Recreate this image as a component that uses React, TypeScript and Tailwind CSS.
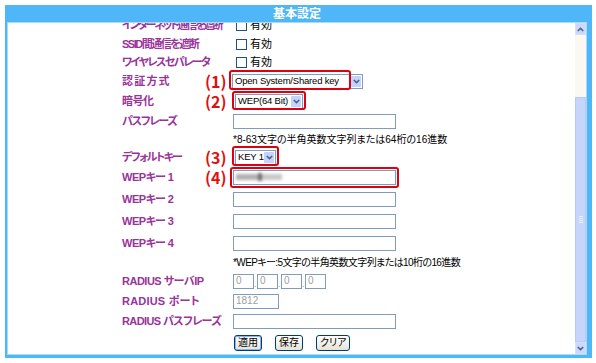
import React from "react";

const FONT = "[font-family:'Liberation_Sans','Noto_Sans_CJK_JP',sans-serif] [font-feature-settings:'palt']";

function Label({ children, t = "" }: { children?: React.ReactNode; t?: string }) {
  return (
    <span className={`w-[83px] shrink-0 whitespace-nowrap text-[11px] font-bold leading-none text-[#993399] ${t}`}>
      {children}
    </span>
  );
}

function Marker({ n }: { n?: number }) {
  return (
    <span className="w-[27px] shrink-0 whitespace-nowrap text-[16px] font-bold leading-none text-[#dd1111] [font-family:'Noto_Sans_CJK_JP',sans-serif]">
      {n ? `(${n})` : ""}
    </span>
  );
}

function Chevron({ up = false }: { up?: boolean }) {
  return (
    <svg width="7" height="5" viewBox="0 0 7 5" className={up ? "rotate-180" : ""}>
      <path d="M0.8 1 L3.5 3.6 L6.2 1" fill="none" stroke="#4d6185" strokeWidth="1.5" />
    </svg>
  );
}

function Select({ text, w }: { text: string; w: string }) {
  return (
    <div className={`flex h-[15px] items-center border border-[#7f9db9] bg-white ${w}`}>
      <span className="flex-1 whitespace-nowrap pl-[2px] text-[9.5px] leading-none tracking-[-0.2px] text-black">{text}</span>
      <span className="mr-[1px] flex h-[11px] w-[10px] shrink-0 items-center justify-center rounded-[1px] bg-[#c3d3fd]">
        <Chevron />
      </span>
    </div>
  );
}

function Input({ w = "w-[163px]", value, gray = false }: { w?: string; value?: string; gray?: boolean }) {
  return (
    <div className={`flex h-[15px] items-center border border-[#7f9db9] bg-white px-[2px] ${w}`}>
      {value ? <span className={`text-[10px] leading-none ${gray ? "text-[#a0a0a0]" : "text-black"}`}>{value}</span> : null}
    </div>
  );
}

function Check() {
  return (
    <div className="ml-[4px] flex items-center gap-[3px]">
      <span className="h-[11px] w-[11px] border border-[#1c5180] bg-white" />
      <span className="text-[11px] leading-none text-black">有効</span>
    </div>
  );
}

function Button({ text, focus = false }: { text: string; focus?: boolean }) {
  return (
    <div
      className={`flex h-[16px] items-center justify-center rounded-[3px] border border-[#003c74] bg-gradient-to-b from-white to-[#e6e3d6] px-[3px] text-[10px] leading-none text-black ${
        focus ? "shadow-[inset_0_0_0_1px_#8fb2f3]" : ""
      }`}
    >
      {text}
    </div>
  );
}

function Annot({ className }: { className: string }) {
  return <div className={`pointer-events-none absolute rounded-[3px] border-2 border-[#dd0011] ${className}`} />;
}

function Scrollbar() {
  return (
    <div className="flex w-[11px] shrink-0 flex-col bg-[#fbf8f1]">
      <div className="flex h-[12px] items-center justify-center border border-[#d5e0fb] bg-[#c9d8fc]">
        <Chevron up />
      </div>
      <div className="h-[62px]" />
      <div className="flex flex-1 items-center justify-center border border-[#b8c9f5] bg-[#c6d5fb]">
        <div className="flex flex-col gap-[1px]">
          <span className="h-px w-[4px] bg-[#e8eefe]" />
          <span className="h-px w-[4px] bg-[#e8eefe]" />
          <span className="h-px w-[4px] bg-[#e8eefe]" />
          <span className="h-px w-[4px] bg-[#e8eefe]" />
        </div>
      </div>
      <div className="flex h-[12px] items-center justify-center border border-[#d5e0fb] bg-[#c9d8fc]">
        <Chevron />
      </div>
    </div>
  );
}

export default function App() {
  return (
    <div className={`h-[363px] w-[596px] bg-white pl-[5px] pt-[5px] ${FONT}`}>
      <div className="flex h-[353px] w-[587px] flex-col bg-[#4fb6f7] pb-[3px] pl-[2px] pr-[5px]">
        <div className="flex h-[17px] items-center justify-center text-[12px] font-bold leading-none text-white">
          基本設定
        </div>
        <div className="flex flex-1 overflow-hidden border border-[#a9d9fb] bg-white">
          <div className="flex-1 overflow-hidden pl-[114px]">
            <div className="mt-[-8px] flex flex-col">
              <div className="flex h-[20px] items-center">
                <Label t="tracking-[-2.1px]">インターネット通信を遮断</Label>
                <Marker />
                <Check />
              </div>
              <div className="flex h-[18px] items-center">
                <Label t="tracking-[-1.5px]">SSID間通信を遮断</Label>
                <Marker />
                <Check />
              </div>
              <div className="flex h-[18px] items-center">
                <Label t="tracking-[-1.6px]">ワイヤレスセパレータ</Label>
                <Marker />
                <Check />
              </div>
              <div className="flex h-[20px] items-center">
                <Label t="tracking-[1.2px]">認証方式</Label>
                <Marker n={1} />
                <div className="relative">
                  <Select text="Open System/Shared key" w="w-[131px]" />
                  <Annot className="left-[-3px] top-[-4px] h-[20px] w-[122px]" />
                </div>
              </div>
              <div className="flex h-[20px] items-center">
                <Label t="tracking-[-0.5px]">暗号化</Label>
                <Marker n={2} />
                <div className="relative ml-[3px]">
                  <Select text="WEP(64 Bit)" w="w-[68px]" />
                  <Annot className="left-[-3px] top-[-3px] h-[19px] w-[74px]" />
                </div>
              </div>
              <div className="flex h-[21px] items-center">
                <Label t="tracking-[-1.2px]">パスフレーズ</Label>
                <Marker />
                <div className="ml-[1px]">
                  <Input />
                </div>
              </div>
              <div className="flex h-[16px] items-center">
                <Label />
                <Marker />
                <span className="ml-[1px] whitespace-nowrap text-[10px] leading-none text-black">
                  *8-63文字の半角英数文字列または64桁の16進数
                </span>
              </div>
              <div className="flex h-[18px] items-center">
                <Label t="tracking-[-1.5px]">デフォルトキー</Label>
                <Marker n={3} />
                <div className="relative ml-[3px]">
                  <Select text="KEY 1" w="w-[41px]" />
                  <Annot className="left-[-3px] top-[-4px] h-[20px] w-[47px]" />
                </div>
              </div>
              <div className="flex h-[22px] items-center">
                <Label t="tracking-[-0.5px]">WEPキー 1</Label>
                <Marker n={4} />
                <div className="relative ml-[1px]">
                  <div className="flex h-[15px] w-[163px] items-center border border-[#7f9db9] bg-white px-[2px]">
                    <span className="flex h-[9px] w-[48px] items-center blur-[1.5px]">
                      <span className="h-[6px] w-[22px] bg-[#b0b0b0]" />
                      <span className="h-[8px] w-[4px] bg-[#707070]" />
                      <span className="h-[6px] w-[20px] bg-[#c8c8c8]" />
                    </span>
                  </div>
                  <Annot className="left-[-3px] top-[-3px] h-[21px] w-[169px]" />
                </div>
              </div>
              <div className="flex h-[22px] items-center">
                <Label t="tracking-[-0.5px]">WEPキー 2</Label>
                <Marker />
                <div className="ml-[1px]">
                  <Input />
                </div>
              </div>
              <div className="flex h-[22px] items-center">
                <Label t="tracking-[-0.5px]">WEPキー 3</Label>
                <Marker />
                <div className="ml-[1px]">
                  <Input />
                </div>
              </div>
              <div className="flex h-[22px] items-center">
                <Label t="tracking-[-0.5px]">WEPキー 4</Label>
                <Marker />
                <div className="ml-[1px]">
                  <Input />
                </div>
              </div>
              <div className="flex h-[17px] items-center">
                <Label />
                <Marker />
                <span className="ml-[1px] whitespace-nowrap text-[10px] leading-none tracking-[-0.6px] text-black">
                  *WEPキー:5文字の半角英数文字列または10桁の16進数
                </span>
              </div>
              <div className="flex h-[20px] items-center">
                <Label t="tracking-[-0.5px]">RADIUS サーバIP</Label>
                <Marker />
                <div className="ml-[1px] flex items-end">
                  <Input w="w-[21px]" value="0" gray />
                  <span className="w-[3px] text-[9px] leading-none text-[#999]">.</span>
                  <Input w="w-[21px]" value="0" gray />
                  <span className="w-[3px] text-[9px] leading-none text-[#999]">.</span>
                  <Input w="w-[21px]" value="0" gray />
                  <span className="w-[3px] text-[9px] leading-none text-[#999]">.</span>
                  <Input w="w-[21px]" value="0" gray />
                </div>
              </div>
              <div className="flex h-[20px] items-center">
                <Label t="tracking-[0.2px]">RADIUS ポート</Label>
                <Marker />
                <div className="ml-[1px]">
                  <Input w="w-[46px]" value="1812" gray />
                </div>
              </div>
              <div className="flex h-[21px] items-center">
                <Label t="tracking-[-0.6px]">RADIUS パスフレーズ</Label>
                <Marker />
                <div className="ml-[1px]">
                  <Input />
                </div>
              </div>
              <div className="flex h-[22px] items-start pt-[3px]">
                <Label />
                <Marker />
                <div className="ml-[2px] flex gap-[13px]">
                  <Button text="適用" focus />
                  <Button text="保存" />
                  <Button text="クリア" />
                </div>
              </div>
            </div>
          </div>
          <Scrollbar />
        </div>
      </div>
    </div>
  );
}
